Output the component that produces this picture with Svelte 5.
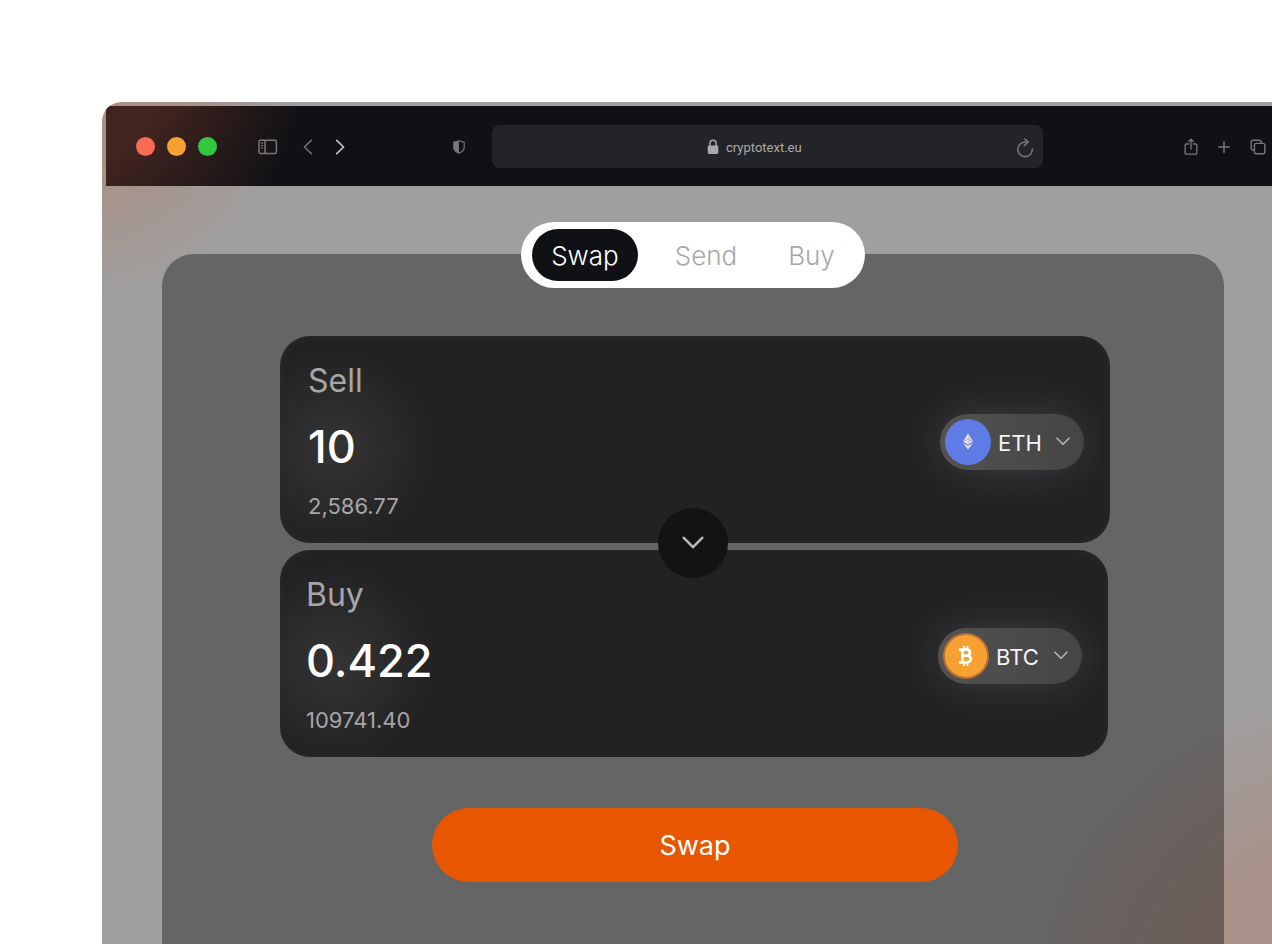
<script lang="ts">
  interface Token {
    symbol: string;
    kind: 'eth' | 'btc';
  }

  interface Side {
    id: string;
    label: string;
    amount: string;
    value: string;
    token: Token;
  }

  const tokens: Token[] = [
    { symbol: 'ETH', kind: 'eth' },
    { symbol: 'BTC', kind: 'btc' },
  ];

  const tabs = ['Swap', 'Send', 'Buy'];
  let activeTab = $state('Swap');
  let url = $state('cryptotext.eu');

  let sides: Side[] = $state([
    { id: 'sell', label: 'Sell', amount: '10', value: '2,586.77', token: tokens[0] },
    { id: 'buy', label: 'Buy', amount: '0.422', value: '109741.40', token: tokens[1] },
  ]);

  function pickToken(side: Side, symbol: string) {
    side.token = tokens.find((t) => t.symbol === symbol) ?? side.token;
  }
</script>

<div class="page">
  <div class="window">
    <header class="toolbar">
      <div class="left">
        <div class="lights">
          <button class="light red" aria-label="Close"></button>
          <button class="light amber" aria-label="Minimise"></button>
          <button class="light green" aria-label="Zoom"></button>
        </div>
        <button class="icon sidebar" aria-label="Show sidebar">
          <svg width="20" height="16" viewBox="0 0 20 16" fill="none" stroke="#78787b" stroke-width="1.5">
            <rect x="1" y="1.2" width="17.4" height="13.2" rx="1.6" />
            <path d="M7 1.2v13.2" />
            <path d="M3 4.2h2.2M3 6.6h2.2M3 9h2.2" stroke-width="1.2" />
          </svg>
        </button>
        <div class="history">
          <button class="icon" aria-label="Back">
            <svg width="10" height="16" viewBox="0 0 10 16" fill="none" stroke="#6f6f72" stroke-width="1.6" stroke-linecap="round" stroke-linejoin="round">
              <path d="M8.3 1.4 1.4 8l6.9 6.6" />
            </svg>
          </button>
          <button class="icon" aria-label="Forward">
            <svg width="10" height="16" viewBox="0 0 10 16" fill="none" stroke="#c4c4c5" stroke-width="1.7" stroke-linecap="round" stroke-linejoin="round">
              <path d="M1.7 1.4 8.6 8l-6.9 6.6" />
            </svg>
          </button>
        </div>
        <button class="icon shield" aria-label="Privacy report">
          <svg width="12" height="14" viewBox="0 0 12 14">
            <path d="M6 .8 11.2 2.4v5.1c0 2.4-2 4.2-5.2 5.7C2.8 11.7.8 9.9.8 7.5V2.4z" fill="none" stroke="#78787b" stroke-width="1.2" stroke-linejoin="round" />
            <path d="M6 .8v12.4C2.8 11.7.8 9.9.8 7.5V2.4z" fill="#78787b" />
          </svg>
        </button>
      </div>

      <div class="address">
        <div class="site">
          <svg width="12" height="16" viewBox="0 0 12 16">
            <path d="M3 7V4.2a3 3 0 0 1 6 0V7" fill="none" stroke="#a9a9aa" stroke-width="1.5" />
            <rect x=".7" y="6.6" width="10.6" height="8.4" rx="1.4" fill="#a9a9aa" />
          </svg>
          <input type="text" aria-label="Address" bind:value={url} />
        </div>
        <button class="icon" aria-label="Reload">
          <svg width="18" height="20" viewBox="0 0 18 20" fill="none" stroke="#78787b" stroke-width="1.6" stroke-linecap="round" stroke-linejoin="round">
            <path d="M11.8 4H9a7.3 7.3 0 1 0 7.4 7.3" />
            <path d="M8.9 1l3.2 3-3.8 3.7" />
          </svg>
        </button>
      </div>

      <div class="right">
        <button class="icon" aria-label="Share">
          <svg width="14" height="18" viewBox="0 0 14 18" fill="none" stroke="#78787b" stroke-width="1.3" stroke-linecap="round" stroke-linejoin="round">
            <path d="M4.6 6H2.3A1.2 1.2 0 0 0 1.1 7.2v7.8a1.2 1.2 0 0 0 1.2 1.2h9.4a1.2 1.2 0 0 0 1.2-1.2V7.2A1.2 1.2 0 0 0 11.7 6H9.4" />
            <path d="M7 11.2V1.4M4.6 3.6 7 1.2l2.4 2.4" />
          </svg>
        </button>
        <button class="icon" aria-label="New tab">
          <svg width="12" height="12" viewBox="0 0 12 12" fill="none" stroke="#78787b" stroke-width="1.5" stroke-linecap="round">
            <path d="M6 .7v10.6M.7 6h10.6" />
          </svg>
        </button>
        <button class="icon" aria-label="Tab overview">
          <svg width="16" height="16" viewBox="0 0 16 16" fill="none" stroke="#78787b" stroke-width="1.4" stroke-linejoin="round">
            <rect x="4.4" y="4.4" width="10.4" height="10.4" rx="1.8" />
            <path d="M4.4 11H3a1.8 1.8 0 0 1-1.8-1.8V3A1.8 1.8 0 0 1 3 1.2h6.4A1.8 1.8 0 0 1 11.2 3v1.4" />
          </svg>
        </button>
      </div>
    </header>

    <main class="panel">
      <nav class="tabs" aria-label="Mode">
        {#each tabs as tab (tab)}
          <button class="tab" class:active={tab === activeTab} onclick={() => (activeTab = tab)}>
            {tab}
          </button>
        {/each}
      </nav>

      <form class="swap" onsubmit={(e) => e.preventDefault()}>
        <div class="cards">
          {#each sides as side (side.id)}
            <section class="card {side.id}">
              <div class="figures">
                <label class="label" for="{side.id}-amount">{side.label}</label>
                <input class="amount" id="{side.id}-amount" type="text" inputmode="decimal" bind:value={side.amount} />
                <p class="value">{side.value}</p>
              </div>
              <div class="token {side.token.kind}">
                <span class="coin">
                  {#if side.token.kind === 'eth'}
                    <svg width="12" height="17" viewBox="0 0 12 17">
                      <path d="M6 .5 1 8.5l5 2.9 5-2.9z" fill="#e6e3df" />
                      <path d="M6 .5v10.9l5-2.9z" fill="#d2d2da" />
                      <path d="M1 9.9 6 16.5l5-6.6-5 2.9z" fill="#e6e3df" />
                      <path d="M1 8.5 6 6.3l5 2.2" fill="none" stroke="#8f9ad8" stroke-width=".7" />
                    </svg>
                  {:else}
                    <svg width="16" height="22" viewBox="0 0 16 22" fill="none" stroke="#fff">
                      <path d="M4.4 4.7v12.6M1 4.7h7.6c4.4 0 4.4 6 0 6H4M8.6 10.7c5.6 0 5.6 6.6 0 6.6H1" stroke-width="2.8" />
                      <path d="M6 1v3.5M9.4 1v3.5M6 17.5V21M9.4 17.5V21" stroke-width="1.9" />
                    </svg>
                  {/if}
                </span>
                <select
                  aria-label="{side.label} token"
                  value={side.token.symbol}
                  onchange={(e) => pickToken(side, e.currentTarget.value)}
                >
                  {#each tokens as token (token.symbol)}
                    <option>{token.symbol}</option>
                  {/each}
                </select>
                <svg class="caret" width="14" height="9" viewBox="0 0 14 9" fill="none" stroke="#b4b4b4" stroke-width="1.6" stroke-linecap="round" stroke-linejoin="round">
                  <path d="M1 1.2l6 6 6-6" />
                </svg>
              </div>
            </section>
          {/each}
          <button class="flip" type="button" aria-label="Switch direction" onclick={() => sides.reverse()}>
            <svg width="22" height="14" viewBox="0 0 22 14" fill="none" stroke="#b9b9b9" stroke-width="2.6" stroke-linecap="round" stroke-linejoin="round">
              <path d="M1.8 1.8 11 11.2l9.2-9.4" />
            </svg>
          </button>
        </div>
        <button class="submit" type="submit">Swap</button>
      </form>
    </main>
  </div>
</div>

<style>
  :global(body) {
    margin: 0;
    background: #fff;
  }
  .page {
    box-sizing: border-box;
    min-height: 100vh;
    padding: 102px 0 0 102px;
    display: flex;
    overflow: hidden;
    font-family: Inter, 'Liberation Sans', sans-serif;
  }
  .page * {
    box-sizing: border-box;
  }
  button,
  input,
  select {
    margin: 0;
    padding: 0;
    border: 0;
    background: none;
    color: inherit;
    font: inherit;
    outline: none;
  }
  button {
    cursor: pointer;
  }
  svg {
    display: block;
  }
  .window {
    flex: 1;
    min-width: 0;
    display: flex;
    flex-direction: column;
    padding: 4px 0 0 4px;
    border-top-left-radius: 20px;
    overflow: hidden;
    background:
      radial-gradient(circle at -40px -40px, #a99085 110px, rgba(169, 144, 133, 0) 240px),
      radial-gradient(circle at calc(100% + 60px) calc(100% + 60px), #a8928a 160px, rgba(168, 146, 138, 0) 310px),
      #9f9f9f;
  }

  .toolbar {
    display: flex;
    align-items: center;
    height: 80px;
    padding: 0 6px 0 30px;
    background: radial-gradient(circle at -40px -40px, #42241f 100px, rgba(66, 36, 31, 0) 240px), #101115;
  }
  .icon {
    margin-top: 2px;
  }
  .left {
    display: flex;
    align-items: center;
    width: 356px;
  }
  .lights {
    display: flex;
    gap: 12px;
  }
  .light {
    width: 19px;
    height: 19px;
    border-radius: 50%;
  }
  .red {
    background: #f86a52;
  }
  .amber {
    background: #f7a133;
  }
  .green {
    background: #32c840;
  }
  .sidebar {
    margin-left: 41px;
  }
  .history {
    display: flex;
    gap: 22px;
    margin-left: 25px;
  }
  .shield {
    margin-left: auto;
    margin-right: 27px;
  }
  .address {
    flex: 1;
    display: flex;
    align-items: center;
    height: 43px;
    padding: 2px 9px 0;
    border-radius: 8px;
    background: #232428;
  }
  .site {
    flex: 1;
    display: flex;
    align-items: center;
    justify-content: center;
    gap: 7px;
    color: #acacad;
    font-family: Roboto, Inter, sans-serif;
    font-size: 13px;
  }
  .site input {
    width: 84px;
  }
  .right {
    display: flex;
    align-items: center;
    justify-content: flex-end;
    gap: 20px;
    width: 223px;
  }

  .panel {
    flex: 1;
    display: flex;
    flex-direction: column;
    align-items: center;
    margin: 68px 48px 0 56px;
    padding-bottom: 62px;
    border-radius: 32px 32px 0 0;
    background: rgba(0, 0, 0, 0.36);
  }
  .tabs {
    display: flex;
    align-items: center;
    height: 66px;
    margin-top: -32px;
    padding: 0 11px;
    border-radius: 33px;
    background: #fff;
    font-size: 26px;
    font-weight: 300;
    color: #a8a8a8;
  }
  .tab {
    height: 52px;
    padding: 0 19px;
    border-radius: 26px;
  }
  .tab + .tab {
    margin-left: 13px;
  }
  .tab.active {
    margin-right: 5px;
    background: #101115;
    color: #fff;
  }

  .swap {
    display: flex;
    flex-direction: column;
    align-items: center;
    width: 80%;
    max-width: 834px;
    margin-top: 48px;
    padding-left: 4px;
  }
  .cards {
    position: relative;
    display: flex;
    flex-direction: column;
    gap: 7px;
    width: 100%;
  }
  .card {
    display: flex;
    align-items: center;
    justify-content: space-between;
    height: 207px;
    padding: 4px 26px 0 28px;
    border-radius: 30px;
    overflow: hidden;
    background:
      radial-gradient(circle at 54px 112px, #343434, rgba(52, 52, 52, 0) 100px),
      #222224;
    box-shadow: inset 0 0 6px #2c2c2e;
  }
  .card.buy {
    margin-right: 2px;
    padding-left: 26px;
  }
  .figures {
    flex: 1;
    min-width: 0;
    color: #a6a6a6;
  }
  .label {
    display: block;
    font-size: 32px;
    font-weight: 400;
    line-height: 42px;
  }
  .amount {
    display: block;
    width: 100%;
    height: 56px;
    margin: 17px 0;
    font-size: 45px;
    font-weight: 500;
    color: #fff;
  }
  .value {
    margin: 0 0 4px;
    font-size: 22px;
    font-weight: 400;
    line-height: 28px;
  }
  .token {
    display: flex;
    align-items: center;
    height: 56px;
    padding: 0 14px 0 5px;
    border-radius: 28px;
    background: linear-gradient(90deg, #555250, #4b4b4c 50%, #454546);
    box-shadow: 0 0 44px rgba(255, 255, 255, 0.13);
    color: #f4f4f4;
    font-size: 22px;
  }
  .coin {
    display: grid;
    place-items: center;
    width: 46px;
    height: 46px;
    border-radius: 50%;
    background: #5f7ce6;
  }
  .btc .coin {
    border: 2px solid #b87333;
    background: #f7a133;
  }
  .token select {
    width: 58px;
    margin-left: 7px;
    padding-top: 2px;
    appearance: none;
  }
  .token option {
    color: #222224;
  }
  .caret {
    pointer-events: none;
  }
  /* sits over the seam between the two cards */
  .flip {
    position: absolute;
    top: 207px;
    left: 50%;
    display: grid;
    place-items: center;
    width: 70px;
    height: 70px;
    margin: -35px -37px;
    border-radius: 50%;
    background: #131215;
  }
  .submit {
    width: 526px;
    max-width: 100%;
    height: 74px;
    margin-top: 51px;
    border-radius: 37px;
    background: #e85600;
    color: #fff;
    font-size: 27px;
  }
</style>
